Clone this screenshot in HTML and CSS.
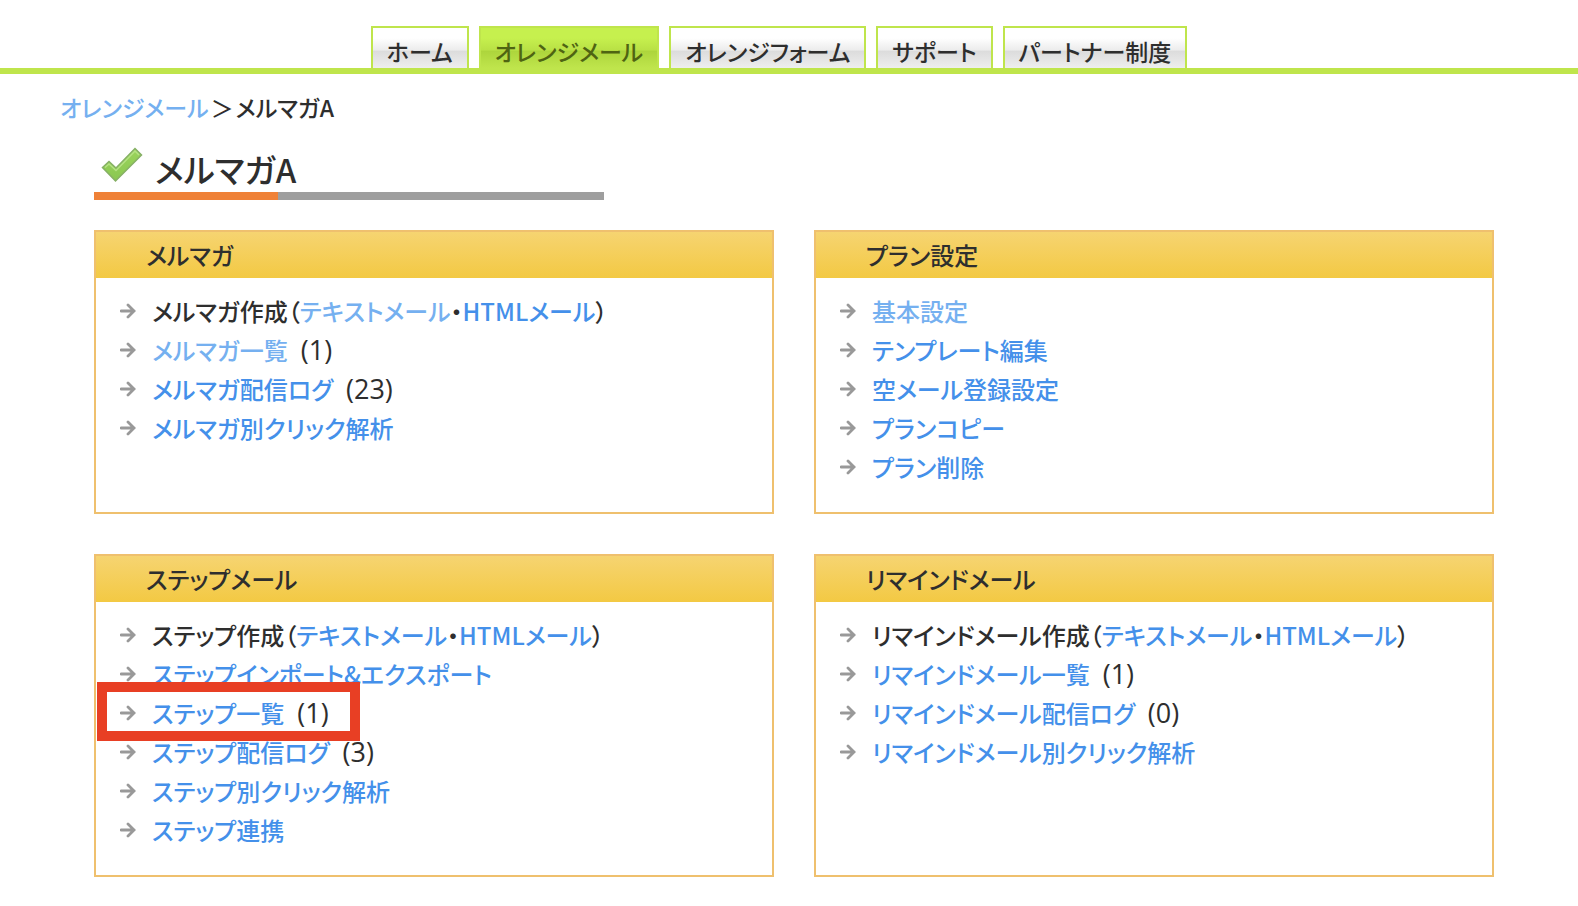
FILE: index.html
```html
<!DOCTYPE html>
<html lang="ja">
<head>
    <meta charset="UTF-8">
    <meta name="viewport" content="width=device-width, initial-scale=1.0">
    <title>メルマガA</title>
    <link rel="stylesheet" href="styles.css">
</head>
<body>
    <!-- Arrow shared by all menu rows -->
    <svg class="sprite" aria-hidden="true">
        <symbol id="arrow" viewBox="0 0 16 16">
            <path d="M1 8H14M8 2L14 8L8 14" fill="none" stroke="currentColor" stroke-width="2.8" stroke-linecap="round"/>
        </symbol>
    </svg>

    <!-- Navigation -->
    <nav class="navbar">
        <a href="#">ホーム</a>
        <a href="#" class="active">オレンジメール</a>
        <a href="#">オレンジフォーム</a>
        <a href="#">サポート</a>
        <a href="#">パートナー制度</a>
    </nav>

    <div class="breadcrumb"><a href="#" class="visited">オレンジメール</a><span class="separator">＞</span>メルマガA</div>

    <main class="content">
        <div class="page-title">
            <svg class="check" viewBox="0 0 42 36" aria-hidden="true">
                <defs>
                    <linearGradient id="checkFill" x1="0" y1="0" x2="0" y2="1">
                        <stop offset="0" stop-color="#9bd45c"/>
                        <stop offset="1" stop-color="#8ac751"/>
                    </linearGradient>
                </defs>
                <path d="M1.500 20.500L8 14.500L15 21L34 1.500L40.500 8L14.500 34Z" fill="url(#checkFill)" stroke="#86b065" stroke-width="1.500"/>
                <path d="M4 20.500L8 17L15 23.500L34 4L38 8" fill="none" stroke="#b5e283" stroke-width="1.500"/>
            </svg>
            <h1>メルマガA</h1>
        </div>

        <div class="panels">
            <section class="panel">
                <h2>メルマガ</h2>
                <ul>
                    <li><svg><use href="#arrow"/></svg>メルマガ作成（<a href="#" class="visited">テキストメール</a>・<a href="#">HTMLメール</a>）</li>
                    <li><svg><use href="#arrow"/></svg><a href="#" class="visited">メルマガ一覧</a><span class="count">(1)</span></li>
                    <li><svg><use href="#arrow"/></svg><a href="#">メルマガ配信ログ</a><span class="count">(23)</span></li>
                    <li><svg><use href="#arrow"/></svg><a href="#">メルマガ別クリック解析</a></li>
                </ul>
            </section>

            <section class="panel">
                <h2>プラン設定</h2>
                <ul>
                    <li><svg><use href="#arrow"/></svg><a href="#" class="visited">基本設定</a></li>
                    <li><svg><use href="#arrow"/></svg><a href="#">テンプレート編集</a></li>
                    <li><svg><use href="#arrow"/></svg><a href="#">空メール登録設定</a></li>
                    <li><svg><use href="#arrow"/></svg><a href="#">プランコピー</a></li>
                    <li><svg><use href="#arrow"/></svg><a href="#">プラン削除</a></li>
                </ul>
            </section>

            <section class="panel">
                <h2>ステップメール</h2>
                <ul>
                    <li><svg><use href="#arrow"/></svg>ステップ作成（<a href="#">テキストメール</a>・<a href="#">HTMLメール</a>）</li>
                    <li><svg><use href="#arrow"/></svg><a href="#">ステップインポート&amp;エクスポート</a></li>
                    <li class="marked"><svg><use href="#arrow"/></svg><a href="#">ステップ一覧</a><span class="count">(1)</span></li>
                    <li><svg><use href="#arrow"/></svg><a href="#">ステップ配信ログ</a><span class="count">(3)</span></li>
                    <li><svg><use href="#arrow"/></svg><a href="#">ステップ別クリック解析</a></li>
                    <li><svg><use href="#arrow"/></svg><a href="#">ステップ連携</a></li>
                </ul>
            </section>

            <section class="panel">
                <h2>リマインドメール</h2>
                <ul>
                    <li><svg><use href="#arrow"/></svg>リマインドメール作成（<a href="#">テキストメール</a>・<a href="#">HTMLメール</a>）</li>
                    <li><svg><use href="#arrow"/></svg><a href="#">リマインドメール一覧</a><span class="count">(1)</span></li>
                    <li><svg><use href="#arrow"/></svg><a href="#">リマインドメール配信ログ</a><span class="count">(0)</span></li>
                    <li><svg><use href="#arrow"/></svg><a href="#">リマインドメール別クリック解析</a></li>
                </ul>
            </section>
        </div>
    </main>
</body>
</html>
```

FILE: styles.css
```css
:root {
    --green: #bfe54c;
    --panel-border: #efc06e;
    --link-color: #4490ea;
    --visited-color: #75b0f0;
    --text-color: #2e2e2e;
}

*,
*::after {
    box-sizing: border-box;
}

body {
    font-family: 'Noto Sans CJK JP', sans-serif;
    font-size: 24px;
    font-weight: 500;
    font-feature-settings: "palt";
    margin: 0;
    background-color: #fff;
    color: var(--text-color);
}

a {
    color: var(--link-color);
    text-decoration: none;
}

a:hover {
    text-decoration: underline;
}

a.visited {
    color: var(--visited-color);
}

.sprite {
    display: none;
}

/* Navigation */
.navbar {
    display: flex;
    justify-content: center;
    gap: 10px;
    padding: 26px 20px 0 0;
    border-bottom: 6px solid var(--green);
}

.navbar a {
    height: 42px;
    padding: 0 14px;
    font-size: 23px;
    line-height: 46px;
    color: var(--text-color);
    border: 2px solid var(--green);
    border-bottom: 0;
    background: linear-gradient(#fff 25%, #ececec 55%, #dcdcdc 58%, #eee 100%);
}

.navbar a.active {
    color: #4f6412;
    background: linear-gradient(#c6f04e 25%, #b9e145 55%, #add53c 58%, #bfe54c 100%);
}

/* Breadcrumb */
.breadcrumb {
    padding: 14px 60px 0;
    font-size: 23px;
    line-height: 38px;
}

.separator {
    margin: 0 2px;
}

.content {
    padding: 21px 84px 30px 94px;
}

/* Title */
.page-title {
    display: flex;
    flex-wrap: wrap;
    gap: 0 12px;
    width: 510px;
    max-width: 100%;
    padding-left: 7px;
    background: linear-gradient(to right, #ef8137 184px, #9e9e9e 184px) bottom / 100% 8px no-repeat;
    padding-bottom: 8px;
}

.page-title h1 {
    margin: 0;
    font-size: 33px;
    font-weight: 500;
    line-height: 45px;
}

.check {
    width: 42px;
    height: 36px;
}

/* Panels */
.panels {
    display: grid;
    grid-template-columns: 1fr 1fr;
    gap: 40px;
    margin-top: 30px;
}

.panel {
    border: 2px solid var(--panel-border);
}

.panel h2 {
    margin: 0;
    padding-left: 50px;
    font-size: 24px;
    font-weight: 500;
    line-height: 46px;
    background: linear-gradient(#f6d471, #f3c943);
}

.panel ul {
    list-style: none;
    margin: 0;
    padding: 13px 0 26px 24px;
}

.panel li {
    display: flex;
    align-items: center;
    height: 39px;
    white-space: nowrap;
}

.panel li svg {
    width: 16px;
    height: 16px;
    margin-right: 16px;
    color: #999;
}

.count {
    margin-left: 13px;
    font-family: 'Open Sans', sans-serif;
    font-size: 27px;
    font-weight: 400;
}

/* Red frame around one row */
.marked {
    position: relative;
}

.marked::after {
    content: "";
    position: absolute;
    top: -11px;
    left: -23px;
    width: 263px;
    height: 59px;
    border: 10px solid #e83f24;
}
```
